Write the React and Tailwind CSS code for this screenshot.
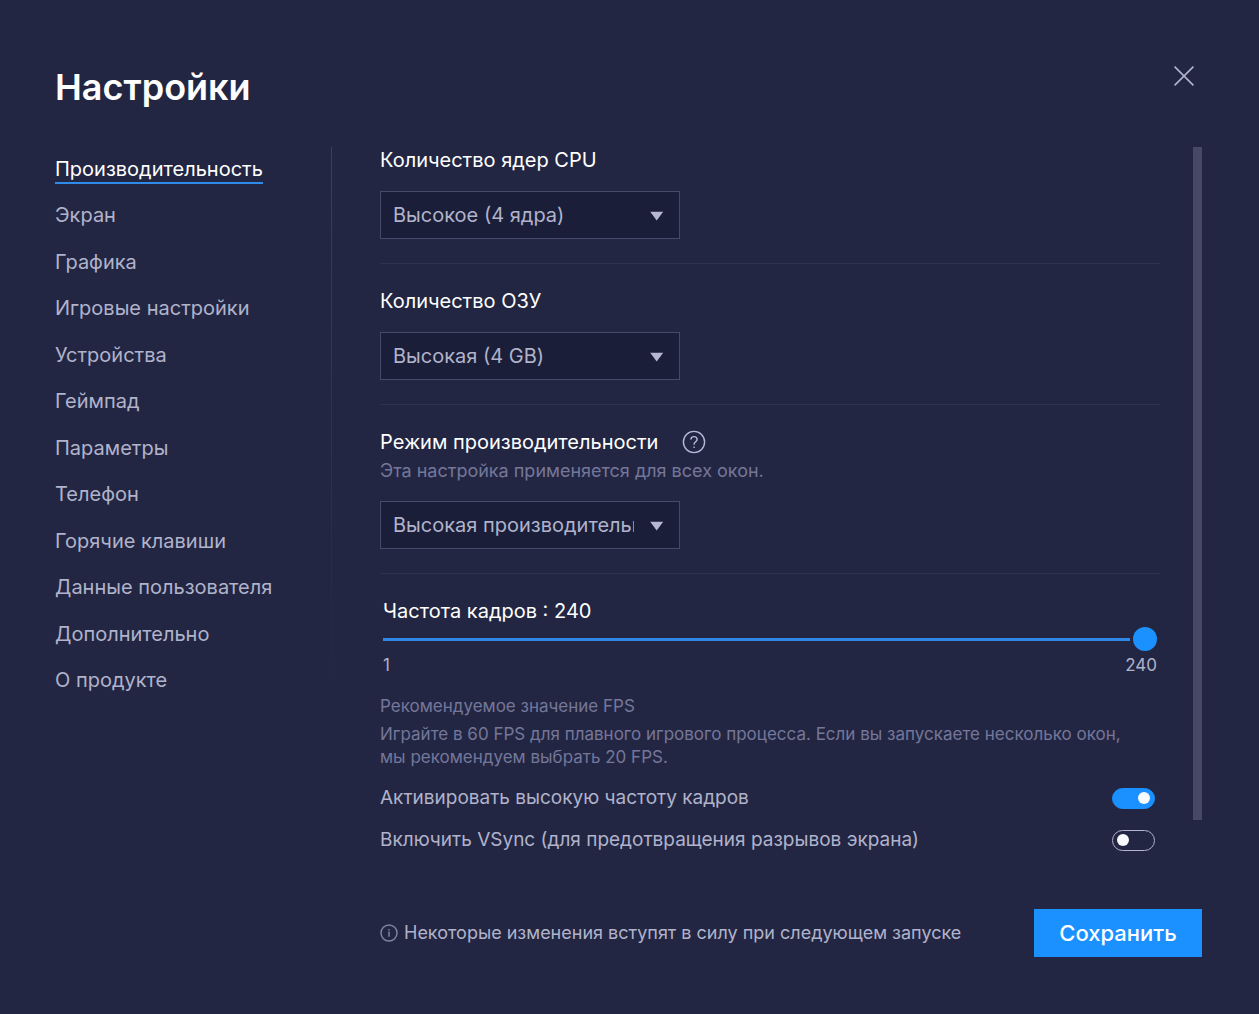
import { useState } from "react";

const menu = [
    "Производительность",
    "Экран",
    "Графика",
    "Игровые настройки",
    "Устройства",
    "Геймпад",
    "Параметры",
    "Телефон",
    "Горячие клавиши",
    "Данные пользователя",
    "Дополнительно",
    "О продукте",
];

function SelectBox({ id, options }) {
    return (
        <div className="relative mt-[18px] w-[300px]">
            <select
                id={id}
                className="block h-12 w-full appearance-none border border-[#464969] bg-[#1b1e38] pl-3 pr-[45px] text-xl text-[#b0b3cb] outline-none"
            >
                {options.map((option) => (
                    <option key={option}>{option}</option>
                ))}
            </select>
            <svg className="pointer-events-none absolute right-4 top-5 h-[10px] w-[14px]" viewBox="0 0 14 10" fill="#b5b8d0">
                <path d="M0.2 0.8h13L6.7 9.6z" />
            </svg>
        </div>
    );
}

function Toggle({ id, label, defaultChecked }) {
    return (
        <div className="flex h-[42px] items-center justify-between pr-[5px]">
            <label htmlFor={id} className="text-[19px] text-[#b0b3cb]">{label}</label>
            <input
                id={id}
                type="checkbox"
                role="switch"
                defaultChecked={defaultChecked}
                className="flex h-[21px] w-[43px] shrink-0 cursor-pointer appearance-none items-center rounded-full border border-[#b0b3cb] px-1 before:block before:size-3 before:rounded-full before:bg-[#f8faff] checked:justify-end checked:border-[#1a91ff] checked:bg-[#1a91ff]"
            />
        </div>
    );
}

function HelpIcon() {
    return (
        <svg className="size-6" viewBox="0 0 24 24" fill="none" stroke="#b5b8d8" strokeWidth="1.4">
            <circle cx="12" cy="12" r="10.6" />
            <path d="M8.9 9.6c0-1.8 1.3-3 3.1-3s3.1 1.1 3.1 2.8c0 2.2-3 2.4-3 4.7v.6" />
            <path d="M12.1 16.4v1.6" />
        </svg>
    );
}

function InfoIcon() {
    return (
        <svg className="size-[18px] shrink-0" viewBox="0 0 18 18" fill="none" stroke="#7f82a0" strokeWidth="1.5">
            <circle cx="9" cy="9" r="8" />
            <path d="M9 7.6v5.2M9 5v1.5" />
        </svg>
    );
}

function App() {
    const [active, setActive] = useState(menu[0]);
    const [fps, setFps] = useState(240);

    return (
        <div className="min-h-screen bg-[#232642] pb-[57px] pl-[55px] pr-[57px] pt-[66px] font-[Inter,'Noto_Sans',sans-serif] text-white">
            <header className="flex items-start justify-between">
                <h1 className="text-4xl font-semibold leading-[42px]">Настройки</h1>
                <button type="button" aria-label="Закрыть" className="mr-2 cursor-pointer">
                    <svg className="size-5" viewBox="0 0 20 20" stroke="#b0b3cb" strokeWidth="1.6">
                        <path d="M0.6 0.6l18.8 18.8M19.4 0.6L0.6 19.4" />
                    </svg>
                </button>
            </header>

            <div className="mt-[39px] flex">
                <nav className="relative w-[277px] shrink-0 pt-[10px]">
                    <ul className="flex h-[538px] flex-col justify-between">
                        {menu.map((item) => (
                            <li key={item} className="flex">
                                <button
                                    type="button"
                                    onClick={() => setActive(item)}
                                    className={`cursor-pointer whitespace-nowrap border-b-2 text-xl leading-[25px] ${
                                        active === item
                                            ? "border-[#2f8be8] text-white"
                                            : "border-transparent text-[#b0b3cb]"
                                    }`}
                                >
                                    {item}
                                </button>
                            </li>
                        ))}
                    </ul>
                    <div className="absolute right-0 top-0 h-[540px] w-px bg-linear-to-b from-[#3c3f5c] to-transparent"></div>
                </nav>

                <main className="min-w-0 flex-1 pl-12">
                    <div className="flex">
                        <div className="min-w-0 flex-1">
                            <section className="border-b border-[#2e3150] pb-6">
                                <label htmlFor="cpu" className="block text-xl leading-[26px]">Количество ядер CPU</label>
                                <SelectBox id="cpu" options={["Высокое (4 ядра)", "Среднее (2 ядра)", "Низкое (1 ядро)"]} />
                            </section>

                            <section className="border-b border-[#2e3150] py-6">
                                <label htmlFor="ram" className="block text-xl leading-[26px]">Количество ОЗУ</label>
                                <SelectBox id="ram" options={["Высокая (4 GB)", "Средняя (2 GB)", "Низкая (1 GB)"]} />
                            </section>

                            <section className="border-b border-[#2e3150] py-6">
                                <div className="flex h-[26px] items-center gap-6">
                                    <label htmlFor="mode" className="text-xl leading-[26px]">Режим производительности</label>
                                    <button type="button" aria-label="Справка" className="cursor-pointer">
                                        <HelpIcon />
                                    </button>
                                </div>
                                <p className="mt-1 text-lg leading-6 text-[#74779a]">Эта настройка применяется для всех окон.</p>
                                <SelectBox id="mode" options={["Высокая производительность", "Сбалансированный", "Низкий расход памяти"]} />
                            </section>

                            <section className="pt-6">
                                <div className="px-[3px]">
                                    <label htmlFor="fps" className="block text-xl leading-[26px]">Частота кадров : {fps}</label>
                                    <input
                                        id="fps"
                                        type="range"
                                        min="1"
                                        max="240"
                                        value={fps}
                                        onChange={(e) => setFps(e.target.value)}
                                        className="mt-[3px] block h-6 w-full cursor-pointer appearance-none bg-transparent [&::-webkit-slider-runnable-track]:h-[3px] [&::-webkit-slider-runnable-track]:bg-[#2f88e6] [&::-webkit-slider-thumb]:-mt-[11px] [&::-webkit-slider-thumb]:size-6 [&::-webkit-slider-thumb]:appearance-none [&::-webkit-slider-thumb]:rounded-full [&::-webkit-slider-thumb]:bg-[#1a91ff] [&::-webkit-slider-thumb]:shadow-[0_0_0_3px_#232642]"
                                    />
                                    <div className="mt-[2px] flex justify-between text-[17px] leading-6 text-[#b0b3cb]">
                                        <span>1</span>
                                        <span>240</span>
                                    </div>
                                </div>
                                <p className="mt-[17px] text-[17px] leading-6 text-[#74779a]">Рекомендуемое значение FPS</p>
                                <p className="mt-[5px] pr-5 text-[17px] leading-[23px] text-[#74779a]">
                                    Играйте в 60 FPS для плавного игрового процесса. Если вы запускаете несколько окон, мы рекомендуем выбрать 20 FPS.
                                </p>
                                <div className="mt-2">
                                    <Toggle id="high-fps" label="Активировать высокую частоту кадров" defaultChecked />
                                    <Toggle id="vsync" label="Включить VSync (для предотвращения разрывов экрана)" />
                                </div>
                            </section>
                        </div>
                        <div className="mb-[41px] ml-[33px] w-[9px] shrink-0 bg-[#464866]"></div>
                    </div>

                    <footer className="mt-12 flex items-center justify-between">
                        <p className="flex items-center gap-[6px] text-lg leading-6 text-[#b0b3cb]">
                            <InfoIcon />
                            Некоторые изменения вступят в силу при следующем запуске
                        </p>
                        <button type="button" className="h-12 w-[168px] shrink-0 cursor-pointer bg-[#1a91ff] text-[22px] font-medium">
                            Сохранить
                        </button>
                    </footer>
                </main>
            </div>
        </div>
    );
}

export default App;
